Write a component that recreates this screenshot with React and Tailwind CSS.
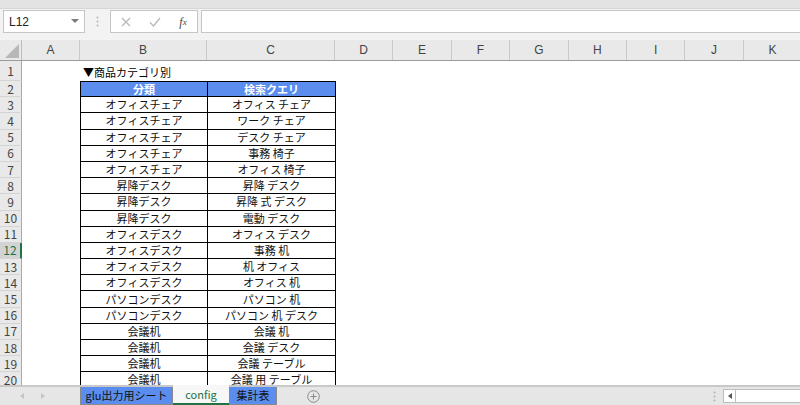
import React from 'react';

const rows = [
  ['オフィスチェア', 'オフィス チェア'],
  ['オフィスチェア', 'ワーク チェア'],
  ['オフィスチェア', 'デスク チェア'],
  ['オフィスチェア', '事務 椅子'],
  ['オフィスチェア', 'オフィス 椅子'],
  ['昇降デスク', '昇降 デスク'],
  ['昇降デスク', '昇降 式 デスク'],
  ['昇降デスク', '電動 デスク'],
  ['オフィスデスク', 'オフィス デスク'],
  ['オフィスデスク', '事務 机'],
  ['オフィスデスク', '机 オフィス'],
  ['オフィスデスク', 'オフィス 机'],
  ['パソコンデスク', 'パソコン 机'],
  ['パソコンデスク', 'パソコン 机 デスク'],
  ['会議机', '会議 机'],
  ['会議机', '会議 デスク'],
  ['会議机', '会議 テーブル'],
  ['会議机', '会議 用 テーブル'],
];

const otherCols = ['D', 'E', 'F', 'G', 'H', 'I', 'J', 'K'];

function RowHead({ n }) {
  const active = n === 12;
  return (
    <div
      className={
        'w-[22px] shrink-0 flex items-center justify-center border-b border-[#d4d4d4] text-[12px] leading-none ' +
        (active
          ? 'bg-[#d3d3d3] text-[#217346] border-r-2 border-r-[#217346]'
          : 'bg-[#e9e9e9] text-[#444] border-r border-r-[#a9a9a9]')
      }
    >
      {n}
    </div>
  );
}

export default function App() {
  return (
    <div className="w-[800px] h-[405px] overflow-hidden bg-white flex flex-col font-['Liberation_Sans','Noto_Sans_CJK_JP',sans-serif] text-[11px] text-black">
      {/* top strip */}
      <div className="h-[9px] shrink-0 bg-[#e3e3e3] border-b border-[#d6d6d6]" />

      {/* formula bar */}
      <div className="h-[31px] shrink-0 bg-[#f3f3f3] flex items-start pt-[1px]">
        <div className="ml-[3px] w-[82px] h-[23px] bg-white border border-[#c6c6c6] flex items-center justify-between px-[5px]">
          <span className="text-[12px] text-[#222]">L12</span>
          <svg width="8" height="5" viewBox="0 0 8 5">
            <path d="M0 0 L8 0 L4 4 Z" fill="#7a7a7a" />
          </svg>
        </div>
        <div className="w-[25px] h-[23px] flex items-center justify-center">
          <svg width="3" height="11" viewBox="0 0 3 11">
            <circle cx="1.5" cy="1.5" r="1" fill="#b5b5b5" />
            <circle cx="1.5" cy="5.5" r="1" fill="#b5b5b5" />
            <circle cx="1.5" cy="9.5" r="1" fill="#b5b5b5" />
          </svg>
        </div>
        <div className="w-[88px] h-[23px] bg-white border border-[#c6c6c6] flex items-center">
          <div className="w-[30px] flex justify-center">
            <svg width="10" height="10" viewBox="0 0 10 10">
              <path d="M1 1 L9 9 M9 1 L1 9" stroke="#b8b8b8" strokeWidth="1.3" />
            </svg>
          </div>
          <div className="w-[28px] flex justify-center">
            <svg width="12" height="10" viewBox="0 0 12 10">
              <path d="M1 5.5 L4.5 9 L11 1" stroke="#b8b8b8" strokeWidth="1.3" fill="none" />
            </svg>
          </div>
          <div className="w-[28px] flex justify-center font-['Liberation_Serif',serif] italic text-[12px] text-[#444]">
            f<span className="text-[9px] mt-[3px]">x</span>
          </div>
        </div>
        <div className="ml-[3px] flex-1 h-[23px] bg-white border border-[#c6c6c6] border-r-0" />
      </div>

      {/* column header */}
      <div className="h-[21px] shrink-0 flex bg-[#e9e9e9] border-b border-[#9b9b9b] text-[12px] text-[#444]">
        <div className="w-[22px] shrink-0 relative border-r border-[#bdbdbd]">
          <svg className="absolute right-[2px] bottom-[2px]" width="14" height="14" viewBox="0 0 14 14">
            <path d="M14 0 L14 14 L0 14 Z" fill="#b7b7b7" />
          </svg>
        </div>
        <div className="w-[58px] shrink-0 flex items-center justify-center border-r border-[#c9c9c9]">A</div>
        <div className="w-[127px] shrink-0 flex items-center justify-center border-r border-[#c9c9c9]">B</div>
        <div className="w-[128px] shrink-0 flex items-center justify-center border-r border-[#c9c9c9]">C</div>
        {otherCols.map((c) => (
          <div key={c} className="w-[58.4px] shrink-0 flex items-center justify-center border-r border-[#c9c9c9]">
            {c}
          </div>
        ))}
      </div>

      {/* sheet */}
      <div className="flex-1 overflow-hidden font-['Noto_Sans_CJK_JP',sans-serif]">
        <div className="h-[20px] flex">
          <RowHead n={1} />
          <div className="w-[58px] shrink-0" />
          <div className="pl-[3px] pt-[2px] flex items-center whitespace-nowrap leading-none">▼商品カテゴリ別</div>
        </div>
        <div className="h-[16.2px] flex">
          <RowHead n={2} />
          <div className="w-[58px] shrink-0" />
          <div className="w-[128px] shrink-0 bg-[#5b8def] text-white font-bold border border-black flex items-center justify-center leading-none">
            分類
          </div>
          <div className="w-[128px] shrink-0 bg-[#5b8def] text-white font-bold border border-l-0 border-black flex items-center justify-center leading-none">
            検索クエリ
          </div>
        </div>
        {rows.map((r, i) => (
          <div key={i} className="h-[16.2px] flex">
            <RowHead n={i + 3} />
            <div className="w-[58px] shrink-0" />
            <div className="w-[128px] shrink-0 border-l border-r border-b border-black flex items-center justify-center leading-none text-[#111]">
              {r[0]}
            </div>
            <div className="w-[128px] shrink-0 border-r border-b border-black flex items-center justify-center leading-none text-[#111]">
              {r[1]}
            </div>
          </div>
        ))}
      </div>

      {/* sheet tabs */}
      <div className="h-[20px] shrink-0 bg-[#e6e6e6] border-t-2 border-[#c8c8c8] flex items-stretch font-['Noto_Sans_CJK_JP',sans-serif] text-[11px]">
        <div className="w-[80px] shrink-0 flex items-center pl-[20px] gap-[17px]">
          <svg width="4" height="6" viewBox="0 0 4 6"><path d="M4 0 L0 3 L4 6 Z" fill="#c4c4c4" /></svg>
          <svg width="4" height="6" viewBox="0 0 4 6"><path d="M0 0 L4 3 L0 6 Z" fill="#c4c4c4" /></svg>
        </div>
        <div className="w-[93px] h-[18px] shrink-0 bg-[#5b8def] border border-[#8a8a8a] border-t-0 flex items-center justify-center text-[#111] leading-none whitespace-nowrap">
          glu出力用シート
        </div>
        <div className="w-[56px] h-[20px] -mt-[2px] shrink-0 bg-[#f7f7f7] border-b-2 border-[#217346] flex items-center justify-center text-[#217346] leading-none">
          config
        </div>
        <div className="w-[48px] h-[18px] shrink-0 bg-[#5b8def] border border-[#8a8a8a] border-t-0 flex items-center justify-center text-[#111] leading-none whitespace-nowrap">
          集計表
        </div>
        <div className="w-[72px] shrink-0 flex items-center justify-center">
          <svg width="13" height="13" viewBox="0 0 13 13">
            <circle cx="6.5" cy="6.5" r="5.8" stroke="#8a8a8a" strokeWidth="1" fill="none" />
            <path d="M6.5 3.5 V9.5 M3.5 6.5 H9.5" stroke="#8a8a8a" strokeWidth="1" />
          </svg>
        </div>
        <div className="flex-1" />
        <div className="w-[14px] flex items-center justify-center">
          <svg width="3" height="11" viewBox="0 0 3 11">
            <circle cx="1.5" cy="1.5" r="1" fill="#b5b5b5" />
            <circle cx="1.5" cy="5.5" r="1" fill="#b5b5b5" />
            <circle cx="1.5" cy="9.5" r="1" fill="#b5b5b5" />
          </svg>
        </div>
        <div className="w-[77px] ml-[2px] h-[14px] mt-[2px] bg-white border border-[#bdbdbd] border-r-0 flex">
          <div className="w-[12px] border-r border-[#bdbdbd] flex items-center justify-center">
            <svg width="4" height="6" viewBox="0 0 4 6"><path d="M4 0 L0 3 L4 6 Z" fill="#555" /></svg>
          </div>
        </div>
      </div>
    </div>
  );
}
